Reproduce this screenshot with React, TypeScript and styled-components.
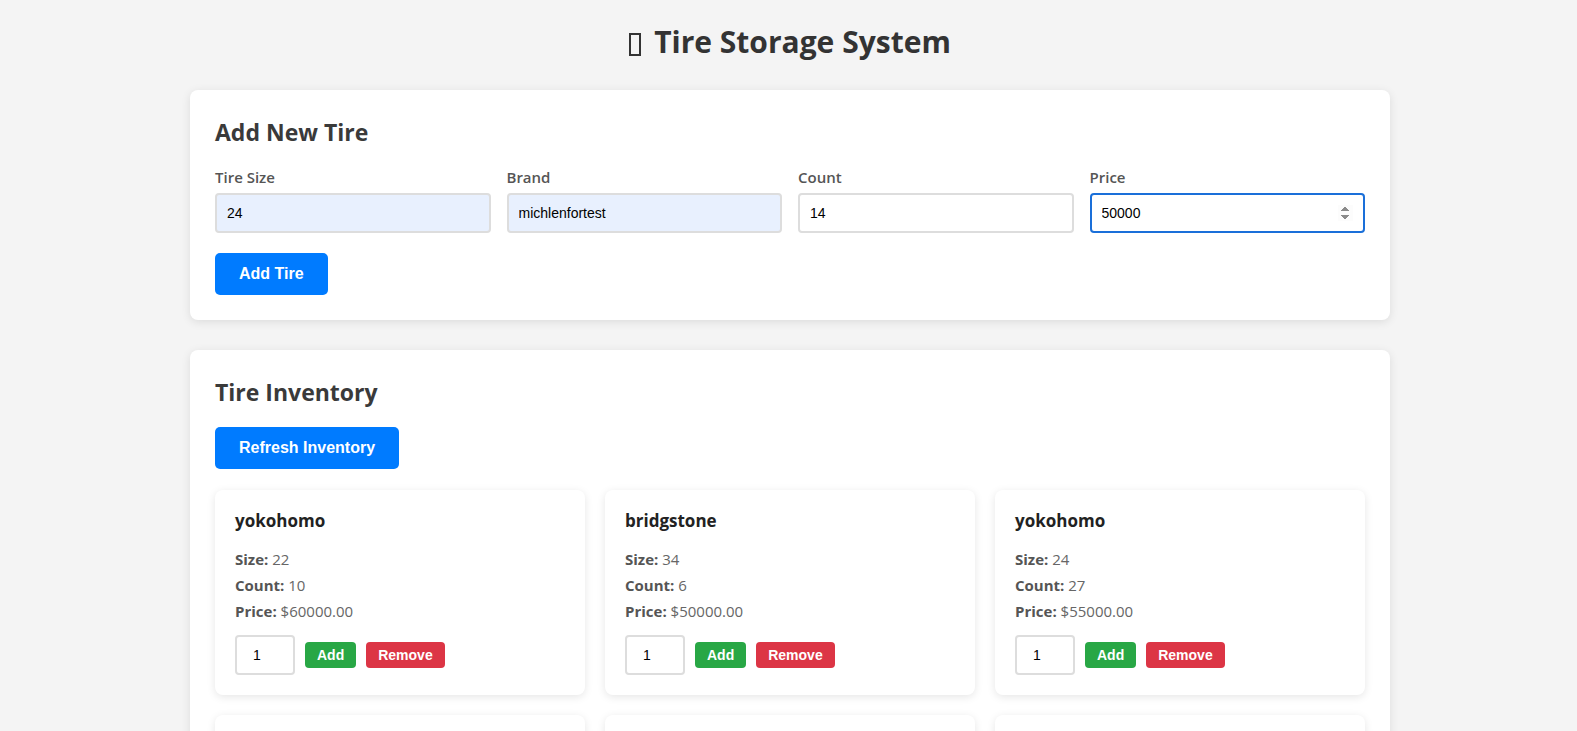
import React, { useState } from 'react'
import styled, { createGlobalStyle } from 'styled-components'

interface Tire {
    id: number
    size: string
    brand: string
    count: number
    price: number
}

const initialTires: Tire[] = [
    { id: 1, size: '22', brand: 'yokohomo', count: 10, price: 60000 },
    { id: 2, size: '34', brand: 'bridgstone', count: 6, price: 50000 },
    { id: 3, size: '24', brand: 'yokohomo', count: 27, price: 55000 },
    { id: 4, size: '18', brand: 'michelin', count: 12, price: 45000 },
    { id: 5, size: '20', brand: 'goodyear', count: 8, price: 40000 },
    { id: 6, size: '16', brand: 'continental', count: 15, price: 35000 },
]

const GlobalStyle = createGlobalStyle`
    * {
        box-sizing: border-box;
    }
    html, body {
        margin: 0;
        background: #f4f4f4;
    }
    body {
        padding: 20px 20px 20px 23px;
        font-family: 'Open Sans', 'Noto Sans', sans-serif;
        color: #333;
    }
`

export default function App() {
    const [tires] = useState(initialTires)

    return (
        <>
            <GlobalStyle />
            <Page>
                <Heading>
                    <MissingGlyph aria-hidden />
                    Tire Storage System
                </Heading>

                <Card>
                    <SectionTitle>Add New Tire</SectionTitle>
                    <FormGrid>
                        <Field>
                            <Label>Tire Size</Label>
                            <TextInput $autofill defaultValue='24' />
                        </Field>
                        <Field>
                            <Label>Brand</Label>
                            <TextInput $autofill defaultValue='michlenfortest' />
                        </Field>
                        <Field>
                            <Label>Count</Label>
                            <TextInput type='number' defaultValue='14' />
                        </Field>
                        <Field>
                            <Label>Price</Label>
                            <TextInput type='number' defaultValue='50000' autoFocus />
                        </Field>
                    </FormGrid>
                    <Button>Add Tire</Button>
                </Card>

                <Card>
                    <SectionTitle>Tire Inventory</SectionTitle>
                    <Button>Refresh Inventory</Button>
                    <TireGrid>
                        {tires.map(tire => (
                            <TireCard key={tire.id}>
                                <TireName>{tire.brand}</TireName>
                                <Detail>
                                    <strong>Size:</strong> {tire.size}
                                </Detail>
                                <Detail>
                                    <strong>Count:</strong> {tire.count}
                                </Detail>
                                <Detail>
                                    <strong>Price:</strong> ${tire.price.toFixed(2)}
                                </Detail>
                                <Controls>
                                    <QtyInput type='number' defaultValue='1' />
                                    <SmallButton $variant='add'>Add</SmallButton>
                                    <SmallButton $variant='remove'>Remove</SmallButton>
                                </Controls>
                            </TireCard>
                        ))}
                    </TireGrid>
                </Card>
            </Page>
        </>
    )
}

const Page = styled('div')`
    max-width: 1200px;
    margin: 0 auto;
`

const Heading = styled('h1')`
    margin: 0 0 26px;
    font-size: 30px;
    line-height: 44px;
    font-weight: 700;
    text-align: center;
    color: #333;
`

// the emoji in the original title shows as an empty "missing glyph" box
const MissingGlyph = styled('span')`
    display: inline-block;
    width: 12px;
    height: 23px;
    margin-right: 13px;
    border: 2px solid #333;
    vertical-align: -3px;
`

const Card = styled('section')`
    background: #fff;
    border-radius: 8px;
    padding: 24px 25px 25px;
    margin-bottom: 30px;
    box-shadow: 0 2px 10px rgba(0, 0, 0, 0.1);
`

const SectionTitle = styled('h2')`
    margin: 0 0 17px;
    font-size: 23px;
    line-height: 36px;
    font-weight: 700;
    color: #3a3a3a;
`

const FormGrid = styled('div')`
    display: grid;
    grid-template-columns: repeat(4, 1fr);
    gap: 16px;
    margin-bottom: 20px;
`

const Field = styled('div')`
    display: flex;
    flex-direction: column;
`

const Label = styled('label')`
    font-size: 15px;
    line-height: 20px;
    font-weight: 600;
    color: #555;
    margin-bottom: 6px;
`

const TextInput = styled('input')<{ $autofill?: boolean }>`
    height: 40px;
    padding: 0 10px;
    border: 2px solid #ddd;
    border-radius: 4px;
    font-family: 'Liberation Sans', Arial, sans-serif;
    font-size: 14px;
    color: #000;
    background: ${({ $autofill }) => ($autofill ? '#e8f0fe' : '#fff')};

    &:focus {
        outline: none;
        border-color: #1a6fd9;
    }
`

const Button = styled('button')`
    display: inline-block;
    padding: 12px 24px;
    border: none;
    border-radius: 5px;
    background: #007bff;
    color: #fff;
    font-family: 'Liberation Sans', Arial, sans-serif;
    font-size: 16px;
    line-height: 18px;
    font-weight: 700;
    cursor: pointer;
`

const TireGrid = styled('div')`
    display: grid;
    grid-template-columns: repeat(3, 1fr);
    gap: 20px;
    margin-top: 21px;
`

const TireCard = styled('div')`
    background: #fff;
    border-radius: 8px;
    padding: 20px;
    box-shadow: 0 2px 8px rgba(0, 0, 0, 0.1);
`

const TireName = styled('h3')`
    margin: 0 0 17px;
    font-size: 17px;
    line-height: 22px;
    font-weight: 700;
    color: #222;
`

const Detail = styled('p')`
    margin: 6px 0;
    font-size: 15px;
    line-height: 20px;
    color: #666;

    strong {
        color: #555;
        font-weight: 700;
    }
`

const Controls = styled('div')`
    display: flex;
    align-items: center;
    gap: 10px;
    margin-top: 14px;
`

const QtyInput = styled('input')`
    width: 60px;
    height: 40px;
    padding: 0 0 0 16px;
    border: 2px solid #ddd;
    border-radius: 4px;
    font-family: 'Liberation Sans', Arial, sans-serif;
    font-size: 14px;
    color: #000;
`

const SmallButton = styled('button')<{ $variant: 'add' | 'remove' }>`
    padding: 5px 12px;
    border: none;
    border-radius: 4px;
    background: ${({ $variant }) => ($variant === 'add' ? '#28a745' : '#dc3545')};
    color: #fff;
    font-family: 'Liberation Sans', Arial, sans-serif;
    font-size: 14px;
    line-height: 16px;
    font-weight: 700;
    cursor: pointer;
`
